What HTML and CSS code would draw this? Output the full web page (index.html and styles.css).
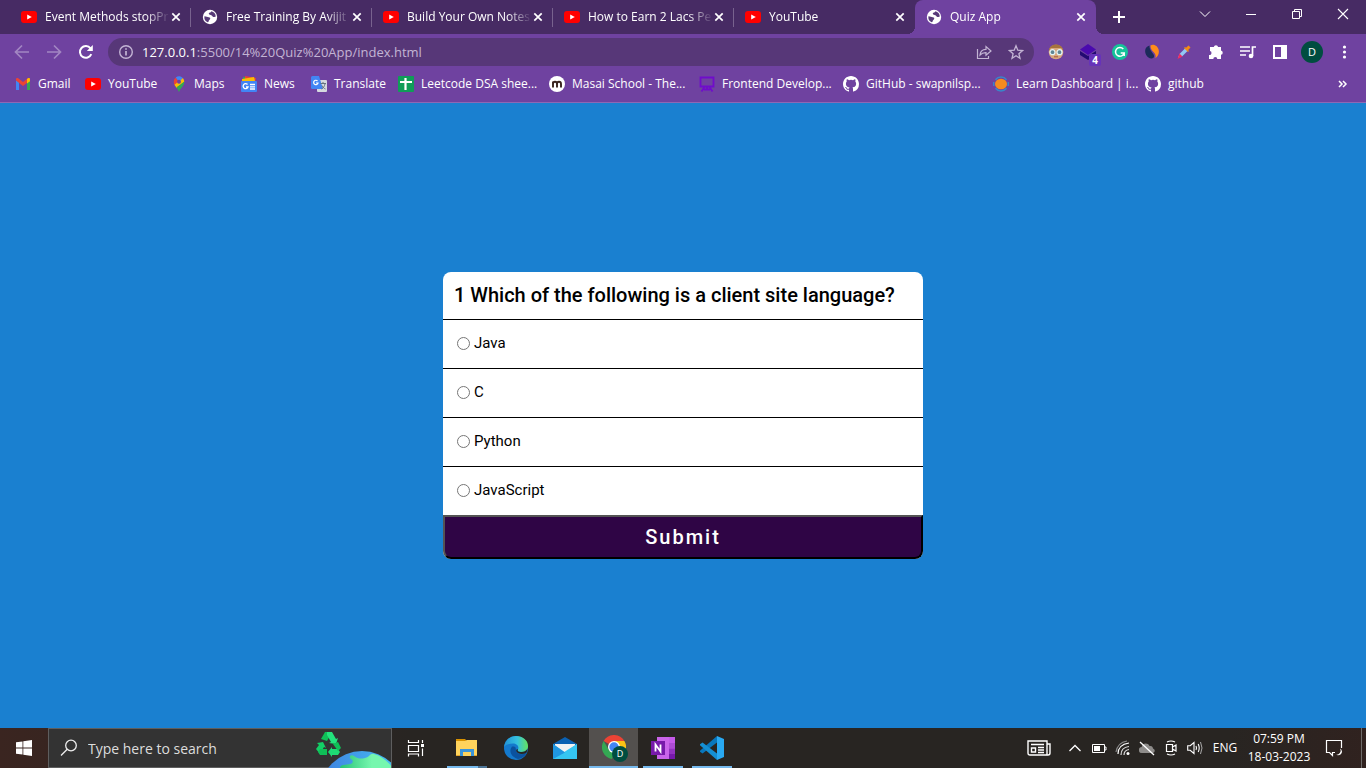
FILE: index.html
```html
<!DOCTYPE html>
<html lang="en">
<head>
<meta charset="utf-8">
<title>Quiz App</title>
<link rel="stylesheet" href="styles.css">
</head>
<body>
<svg class="defs" aria-hidden="true">
  <symbol id="yt" viewBox="0 0 16 16"><rect y="2" width="16" height="12" rx="3" fill="#f00"/><path d="M6.2 5.4v5.2L10.8 8z" fill="#fff"/></symbol>
  <symbol id="globe" viewBox="0 0 16 16"><circle cx="8" cy="8" r="7.2" fill="#fff"/><path d="M2.4 7.2c2 .2 3 .9 4.3 1 1.500.1 1.800.8 1.400 1.800-.3.900-1.300 1-1.400 2.100-.1.800-.4 1.200-1 1.200A5.800 5.800 0 0 1 2.400 7.200zM9.300 2.300c-.2 1-.9 1.300-1.900 1.500-.9.200-.6 1.200-.1 1.700.7.700 2 .3 2.700 1.200.6.900 1.400 1.500 2.400 1.300l1.400-.6A5.800 5.800 0 0 0 9.300 2.300z" fill="#573a78"/></symbol>
  <symbol id="close" viewBox="0 0 16 16"><path d="M4.300 4.300l7.400 7.400M11.700 4.300l-7.400 7.400" stroke="#fff" stroke-width="1.700" fill="none"/></symbol>
  <symbol id="octocat" viewBox="0 0 16 16"><path fill="#fff" d="M8 0C3.580 0 0 3.580 0 8c0 3.540 2.290 6.530 5.470 7.590.4.070.55-.17.55-.38 0-.19-.01-.82-.01-1.490-2.010.37-2.530-.49-2.690-.94-.09-.23-.48-.94-.82-1.130-.28-.15-.68-.52-.01-.53.63-.01 1.080.58 1.230.82.72 1.210 1.870.87 2.330.66.07-.52.28-.87.51-1.070-1.780-.2-3.640-.89-3.640-3.950 0-.87.31-1.590.82-2.150-.08-.2-.36-1.020.08-2.120 0 0 .67-.21 2.200.82a7.600 7.600 0 0 1 4 0c1.530-1.040 2.200-.82 2.200-.82.44 1.100.16 1.920.08 2.120.51.56.82 1.270.82 2.150 0 3.070-1.870 3.750-3.650 3.950.29.25.54.73.54 1.480 0 1.070-.01 1.930-.01 2.200 0 .21.15.46.55.38A8 8 0 0 0 16 8c0-4.420-3.580-8-8-8z"/></symbol>
</svg>

<header class="browser">
  <div class="tabstrip">
    <div class="tabs">
      <div class="tab"><svg class="ico"><use href="#yt"/></svg><span class="tab-title">Event Methods stopPr</span><button class="tab-close" aria-label="Close tab"><svg class="ico"><use href="#close"/></svg></button></div>
      <div class="tab"><svg class="ico"><use href="#globe"/></svg><span class="tab-title">Free Training By Avijit</span><button class="tab-close" aria-label="Close tab"><svg class="ico"><use href="#close"/></svg></button></div>
      <div class="tab"><svg class="ico"><use href="#yt"/></svg><span class="tab-title">Build Your Own Notes</span><button class="tab-close" aria-label="Close tab"><svg class="ico"><use href="#close"/></svg></button></div>
      <div class="tab"><svg class="ico"><use href="#yt"/></svg><span class="tab-title">How to Earn 2 Lacs Pe</span><button class="tab-close" aria-label="Close tab"><svg class="ico"><use href="#close"/></svg></button></div>
      <div class="tab"><svg class="ico"><use href="#yt"/></svg><span class="tab-title">YouTube</span><button class="tab-close" aria-label="Close tab"><svg class="ico"><use href="#close"/></svg></button></div>
      <div class="tab tab-active"><svg class="ico"><use href="#globe"/></svg><span class="tab-title">Quiz App</span><button class="tab-close" aria-label="Close tab"><svg class="ico"><use href="#close"/></svg></button></div>
      <button class="new-tab" aria-label="New tab"><svg width="14" height="14" viewBox="0 0 14 14"><path d="M7 1v12M1 7h12" stroke="#fff" stroke-width="2"/></svg></button>
    </div>
    <div class="window-controls">
      <button aria-label="Search tabs"><svg width="12" height="12" viewBox="0 0 12 12"><path d="M1 3.500l5 5 5-5" fill="none" stroke="#fff"/></svg></button>
      <button aria-label="Minimize"><svg width="10" height="12" viewBox="0 0 10 12"><path d="M0 6.500h10" stroke="#fff"/></svg></button>
      <button aria-label="Restore"><svg width="11" height="12" viewBox="0 0 11 12"><path d="M.5 3.500h7v7h-7zM2.500 3.500v-2h7v7h-2" fill="none" stroke="#fff"/></svg></button>
      <button aria-label="Close window"><svg width="12" height="12" viewBox="0 0 12 12"><path d="M1 1l10 10M11 1L1 11" stroke="#fff" stroke-width="1.100"/></svg></button>
    </div>
  </div>

  <div class="toolbar">
    <button class="tool" aria-label="Back"><svg class="ico" viewBox="0 0 16 16"><path d="M15 8H2M8 1.500L1.500 8 8 14.500" fill="none" stroke="#a286c2" stroke-width="1.700"/></svg></button>
    <button class="tool" aria-label="Forward"><svg class="ico" viewBox="0 0 16 16"><path d="M1 8h13M8 1.500L14.500 8 8 14.500" fill="none" stroke="#a286c2" stroke-width="1.700"/></svg></button>
    <button class="tool" aria-label="Reload"><svg class="ico" viewBox="0 0 16 16"><path d="M13.300 10.200A5.900 5.900 0 1 1 12.500 4.300" fill="none" stroke="#fff" stroke-width="2"/><path d="M14.800 1v6H8.800z" fill="#fff"/></svg></button>
    <div class="omnibox">
      <svg class="ico" viewBox="0 0 16 16"><circle cx="8" cy="8" r="6.300" fill="none" stroke="#c3b4d4" stroke-width="1.400"/><path d="M8 7v4.500M8 4.200v1.600" stroke="#c3b4d4" stroke-width="1.700"/></svg>
      <a class="url" href="#"><b>127.0.0.1</b>:5500/14%20Quiz%20App/index.html</a>
      <button class="tool" aria-label="Share"><svg class="ico" viewBox="0 0 16 16"><path d="M1.500 5v9.500h11V12" fill="none" stroke="#c3b4d4" stroke-width="1.200"/><path d="M4 11c.3-4 2.300-5.600 6-5.700V2.500L15 7l-5 4.300V8.600C7.300 8.500 5.600 9.300 4 11z" fill="none" stroke="#c3b4d4" stroke-width="1.200"/></svg></button>
      <button class="tool" aria-label="Bookmark this tab"><svg class="ico" viewBox="0 0 16 16"><path d="M8 1.800l1.800 4.400 4.700.4-3.600 3.100 1.100 4.600L8 11.800l-4 2.500 1.100-4.600L1.500 6.600l4.700-.4z" fill="none" stroke="#c3b4d4" stroke-width="1.300"/></svg></button>
    </div>
    <div class="extensions">
      <button class="tool" aria-label="Avatar extension"><svg class="ico" viewBox="0 0 16 16"><circle cx="8" cy="8" r="7.300" fill="#d9a87c"/><path d="M.8 7C1 3 4 .5 8 .5S15 3 15.200 7l-2-3H2.800z" fill="#a5733e"/><circle cx="4.500" cy="8.200" r="2.500" fill="#5f8794" stroke="#e4f4f7" stroke-width="1.200"/><circle cx="11.500" cy="8.200" r="2.500" fill="#5f8794" stroke="#e4f4f7" stroke-width="1.200"/><path d="M6 12.800h4" stroke="#a4583f"/></svg></button>
      <button class="tool" aria-label="Layers extension"><svg class="ico" viewBox="0 0 16 16"><path d="M0 7l8 5 8-5v4l-8 5-8-5z" fill="#220a72"/><path d="M8 0l8 5.500L8 11 0 5.500z" fill="#4a0aae"/></svg><span class="badge">4</span></button>
      <button class="tool" aria-label="Grammar checker"><svg class="ico" viewBox="0 0 16 16"><circle cx="8" cy="8" r="8" fill="#15c39a"/><path d="M11.300 5A4.400 4.400 0 1 0 12.200 9H8.700M12.200 8.500V12" fill="none" stroke="#fff" stroke-width="1.500"/></svg></button>
      <button class="tool" aria-label="Swirl extension"><svg class="ico" viewBox="0 0 16 16"><path d="M5.500 1.500C1 3 .2 7 2.200 11 4 14.500 8.500 15.700 10 13 11 9.500 5 7.500 5.500 1.500z" fill="#1c2b5a"/><path d="M6.500 1.500c3-2 7.700.2 8.300 5.200.4 3-1 6-3.600 7.500C13.500 8.500 6 8 6.500 1.500z" fill="#ff8c1a"/></svg></button>
      <button class="tool" aria-label="Colour picker"><svg class="ico" viewBox="0 0 16 16"><path d="M2 14l1.500-4L9 4.500 11.500 7 6 12.500z" fill="#92c9f4"/><path d="M1.500 15l2-5.500 3 3z" fill="#f12a61"/><path d="M8 4l4 4 1-1-.8-1 2.300-2.500L12.500 1.500 10 3.800 9 3z" fill="#f58b12"/></svg></button>
      <button class="tool" aria-label="Extensions"><svg class="ico" viewBox="0 0 16 16"><path d="M2 3h3.800a2.200 2.200 0 0 1 4.300 0H13v3.500a2.200 2.200 0 0 1 0 4.300V15H9.300a2 2 0 0 0-4 0H1v-4a2 2 0 0 0 1-3.900z" fill="#fff"/></svg></button>
      <button class="tool" aria-label="Media control"><svg class="ico" viewBox="0 0 16 16"><path d="M0 3h10M0 7h10M0 11h6M12.500 12V3H16" fill="none" stroke="#fff" stroke-width="1.700"/><circle cx="11" cy="12" r="2.300" fill="#fff"/></svg></button>
      <button class="tool" aria-label="Side panel"><svg class="ico" viewBox="0 0 16 16"><path fill-rule="evenodd" d="M1 1h14v14H1zM3 3v10h6V3z" fill="#fff"/></svg></button>
      <button class="tool" aria-label="Profile"><span class="profile">D</span></button>
      <button class="tool" aria-label="Menu"><svg class="ico" viewBox="0 0 16 16"><g fill="#fff"><circle cx="8.500" cy="3" r="1.600"/><circle cx="8.500" cy="8" r="1.600"/><circle cx="8.500" cy="13" r="1.600"/></g></svg></button>
    </div>
  </div>

  <nav class="bookmarks" aria-label="Bookmarks">
    <a href="#"><svg class="ico" viewBox="0 0 16 16"><path d="M1 14V4l3 2v8z" fill="#4285f4"/><path d="M12 14V6l3-2v10z" fill="#34a853"/><path d="M1 4.500V3.300C1 2 2.500 1.800 3.500 2.500L8 6l4.500-3.500C13.500 1.800 15 2 15 3.300v1.200L8 10z" fill="#ea4335"/><path d="M12 3l1-.7c1-.6 2 0 2 1v2L12 7.500z" fill="#fbbc04"/></svg>Gmail</a>
    <a href="#"><svg class="ico"><use href="#yt"/></svg>YouTube</a>
    <a href="#"><svg class="ico" viewBox="0 0 16 16"><path d="M8 16C7.300 12.500 2.800 10 2.800 5.700h10.400C13.200 10 8.700 12.500 8 16z" fill="#34a853"/><path d="M2.800 5.700C2.800 4 3.500 2.600 4.800 1.500L8 5.500 4 10C3.200 8.700 2.800 7.300 2.800 5.700z" fill="#ea4335"/><path d="M3.500 8.700L11.700 2c1 1 1.500 2.300 1.500 3.700L5.700 12z" fill="#fbbc04"/><path d="M13.200 5.700c0 4-4.500 6.300-5.200 10.300-.4-2-1.500-3.200-2.500-4.700z" fill="#34a853"/><path d="M4.800 1.500C6.800-.3 10 0 11.700 2L8 6z" fill="#4285f4"/><circle cx="8" cy="5.700" r="2" fill="#6f42a0"/></svg>Maps</a>
    <a href="#"><svg class="ico" viewBox="0 0 16 16"><path d="M2 1h9v5H2z" fill="#34a853"/><path d="M4 0l11 2-1 4H4z" fill="#ea4335"/><path d="M1 3l12-2 1 4H1z" fill="#fbbc04"/><rect y="5" width="16" height="11" rx="1" fill="#4285f4"/><path d="M6.500 8.500A2.500 2.500 0 1 0 7 11H5M9 8.500h5M9 10.800h5M9 13h5" fill="none" stroke="#fff" stroke-width="1.300"/></svg>News</a>
    <a href="#"><svg class="ico" viewBox="0 0 16 16"><rect x="6" y="4" width="10" height="12" rx="1" fill="#d5d9df"/><path d="M0 1.500Q0 0 1.500 0H8l4 13H1.500Q0 13 0 11.500z" fill="#4285f4"/><path d="M6.500 5A2.200 2.200 0 1 0 7 7H5" fill="none" stroke="#fff" stroke-width="1.200"/><path d="M9.500 7.500H15M12 6v1.500M10.500 13c2-1 3-3 3.500-5M11 9.500c1 2 2 3 3.500 3.500" fill="none" stroke="#65737f"/></svg>Translate</a>
    <a href="#"><svg class="ico" viewBox="0 0 16 16"><rect width="16" height="16" rx="1" fill="#0f9d58"/><path d="M7.500 2v12M2 6h12" stroke="#fff" stroke-width="2.200"/></svg>Leetcode DSA shee...</a>
    <a href="#"><svg class="ico" viewBox="0 0 16 16"><circle cx="8" cy="8" r="8" fill="#fff"/><path d="M4 11.500V5.500M4 8c0-3 4-3 4 0v3.500M8 8c0-3 4-3 4 0v3.500" fill="none" stroke="#38231c" stroke-width="1.900"/></svg>Masai School - The...</a>
    <a href="#"><svg class="ico" viewBox="0 0 16 16"><path d="M1.500 1.500h13v9h-13zM5.500 11L2.500 15.500M10.500 11l3 4.500M8 11v3M5 13.500h6" fill="none" stroke="#700ccb" stroke-width="1.800"/></svg>Frontend Develop...</a>
    <a href="#"><svg class="ico"><use href="#octocat"/></svg>GitHub - swapnilsp...</a>
    <a href="#"><svg class="ico" viewBox="0 0 16 16"><path d="M2.500 3.700A7 7 0 0 1 13.500 3.700M2.500 12.300A7 7 0 0 0 13.500 12.300M.7 6v4M15.300 6v4" fill="none" stroke="#3a86c8" stroke-width="1.500"/><ellipse cx="8" cy="8" rx="6" ry="5.300" fill="#f68b1f"/></svg>Learn Dashboard | i...</a>
    <a href="#"><svg class="ico"><use href="#octocat"/></svg>github</a>
    <button class="overflow" aria-label="More bookmarks"><svg width="10" height="10" viewBox="0 0 10 10"><path d="M1 2l3 3-3 3M5 2l3 3-3 3" fill="none" stroke="#fff" stroke-width="1.500"/></svg></button>
  </nav>
</header>

<main class="page">
  <form class="quiz">
    <h1 class="question">1 Which of the following is a client site language?</h1>
    <label class="option"><input type="radio" name="answer">Java</label>
    <label class="option"><input type="radio" name="answer">C</label>
    <label class="option"><input type="radio" name="answer">Python</label>
    <label class="option"><input type="radio" name="answer">JavaScript</label>
    <button class="submit" type="button">Submit</button>
  </form>
</main>

<footer class="taskbar">
  <button class="task" aria-label="Start"><svg class="ico" viewBox="0 0 16 16"><path d="M0 2.300L6.500 1.400V7.600H0zM7.300 1.300L16 0v7.600H7.300zM0 8.400h6.500v6.200L0 13.700zM7.300 8.400H16V16l-8.700-1.300z" fill="#fff"/></svg></button>
  <div class="search">
    <svg class="search-icon" viewBox="0 0 18 18"><circle cx="11" cy="6.500" r="5.300" fill="none" stroke="#eee" stroke-width="1.300"/><path d="M7.200 10.300L1 16.500" stroke="#eee" stroke-width="1.300"/></svg>
    <input type="text" placeholder="Type here to search" aria-label="Type here to search">
    <svg class="search-art" viewBox="0 0 78 40" aria-hidden="true">
      <defs><linearGradient id="sea"><stop offset="0" stop-color="#3d7fe0"/><stop offset="1" stop-color="#48c6f4"/></linearGradient><linearGradient id="leaf"><stop offset="0" stop-color="#27c277"/><stop offset=".6" stop-color="#76f7ae"/></linearGradient></defs>
      <circle cx="49" cy="65" r="42" fill="url(#sea)"/>
      <path d="M27 40c0-4 6-3 10-4 4-1 3-4 1-5-3-2 0-5 3-3 4 3 7 3 11 2 5-1 5-5 9-4 8 2 14 8 19 14v2H27z" fill="url(#leaf)"/>
      <g fill="#0fbf57"><path d="M8 11l4-7h7l-5 9z"/><path d="M14 4h5l4 7 2-1-2 6-7-1 2-1-4-7z" fill="#23e37c"/><path d="M4 15l6-1 3 6-2-1-4 7-4-5 3-4z" fill="#13cf66"/><path d="M5 24l2-3h7v6H7z"/><path d="M15 24l4-5v2h6l2 3-2 3h-6v2z" fill="#1edb75"/><path d="M20 16l5-2 3 6-3 3z"/></g>
    </svg>
  </div>
  <button class="task" aria-label="Task view"><svg width="18" height="18" viewBox="0 0 18 18"><path d="M1.500 1v2.500h10V1M1.500 6.500h10v6h-10zM1.500 17.500V15h10v2.500M15.500 1v3M15.500 9.500V17" fill="none" stroke="#fff" stroke-width="1.200"/><path d="M14 5h3v3h-3z" fill="#fff"/></svg></button>
  <div class="apps">
    <button class="app app-open app-stack" aria-label="File Explorer"><svg viewBox="0 0 24 24"><path d="M1 3h9l2 2H1z" fill="#d99200"/><path d="M1 5h9l2-1h10v16H1z" fill="#ffd35c"/><path d="M5 20v-7h14v7h-3v-4H8v4z" fill="#3a94da"/><path d="M1 19h4v1H1zM19 19h3v1h-3z" fill="#e3a52b"/></svg></button>
    <button class="app" aria-label="Edge"><svg viewBox="0 0 24 24"><defs><linearGradient id="ea"><stop offset="0" stop-color="#2291d6"/><stop offset=".55" stop-color="#35c1df"/><stop offset="1" stop-color="#66e25d"/></linearGradient></defs><circle cx="12" cy="12" r="12" fill="#1479cc"/><path d="M0 11C1 4 6 0 12 0c7 0 12 4.500 12 10 0 4-3 6-7 6-3 0-4-1-3-2.500C15.500 10 12.500 7.500 9 7.500 5 7.500 2 8.500 0 11z" fill="url(#ea)"/><path d="M8 10.500c-4 5 0 11 6 12.500 4-.3 7-3 8.700-6-4 2-10 1.500-10.700-2.500-.3-2 .5-4.500-4-4z" fill="#0b529f"/><path d="M14 13.500c-1 1.500 0 2.500 3 2.500 3 0 5.500-1 6.500-3.500-.2 2-.5 3-1.200 4.500-3.500 1.500-8.500 1.300-9.900-1.500-.5-1.200 0-3 1.600-2z" fill="#282522"/></svg></button>
    <button class="app" aria-label="Mail"><svg viewBox="0 0 24 24"><path d="M0 8L12 1l12 7v4H0z" fill="#0b61b2"/><path d="M2 8h20v8H2z" fill="#f2f2f2"/><path d="M0 8l12 8.500L24 8v15H0z" fill="#2fb5ee"/><path d="M24 8v15L0 23z" fill="#35c5f2"/><path d="M0 8v15l12-6.500z" fill="#2096e0"/></svg></button>
    <button class="app app-active" aria-label="Chrome"><svg viewBox="0 0 24 24"><path d="M12 12L1.600 6A12 12 0 0 1 22.400 6z" fill="#ea4335"/><path d="M12 12V6h10.400A12 12 0 0 1 12 24z" fill="#fbc116"/><path d="M1.600 6L7 15l5 3-2 6A12 12 0 0 1 1.600 6z" fill="#34a853"/><circle cx="12" cy="12" r="6" fill="#fff"/><circle cx="12" cy="12" r="4.700" fill="#4285f4"/></svg><span class="app-badge">D</span></button>
    <button class="app app-open" aria-label="OneNote"><svg viewBox="0 0 24 24"><path d="M6 1h18v22H6z" fill="#ca64ea"/><path d="M18 1h6v6h-6z" fill="#c55ae9"/><path d="M18 7h6v5.500h-6z" fill="#ae4bd5"/><path d="M18 12.500h6V18h-6z" fill="#9332bf"/><path d="M18 18h6v5h-6z" fill="#7719aa"/><path d="M0 5h14v14H0z" fill="#7719aa"/><path d="M4.500 15.500v-7l5 7v-7" fill="none" stroke="#fff" stroke-width="1.800"/></svg></button>
    <button class="app app-open" aria-label="VS Code"><svg viewBox="0 0 24 24"><path d="M17 6.500L2.500 17.500 0 15.800v-1L17 0z" fill="#0877bd"/><path d="M17 17.500L2.500 6.500 0 8.200v1L17 24z" fill="#158fd3"/><path d="M17 0l7 3v18l-7 3z" fill="#29a9f2"/></svg></button>
  </div>
  <div class="tray">
    <button class="tray-news" aria-label="News and interests"><svg width="24" height="16" viewBox="0 0 24 16"><path d="M1 1h19v14H3q-2 0-2-2zM20 4h3v9q0 2-2 2h-2M4 4.500h13M11 7.500h6M11 10h6M11 12.500h6M4.500 8h4v4h-4z" fill="none" stroke="#fff" stroke-width="1.400"/></svg></button>
    <button aria-label="Show hidden icons"><svg width="14" height="14" viewBox="0 0 14 14"><path d="M1.500 10L7 4.500l5.500 5.500" fill="none" stroke="#fff" stroke-width="1.300"/></svg></button>
    <button aria-label="Battery"><svg width="16" height="12" viewBox="0 0 16 12"><path d="M1.500 2.500h12v8h-12zM13.500 5H15v3h-1.500" fill="none" stroke="#fff"/><path d="M3 4h6v5H3z" fill="#fff"/></svg></button>
    <button aria-label="Wi-Fi"><svg class="ico" viewBox="0 0 16 16"><g fill="none" stroke="#ddd" stroke-width="1.200"><path d="M3 14C3 8 7 4 14 3" stroke="#fff"/><path d="M1 12C2 6 6 2 12 1" stroke="#888"/><path d="M6 15c0-5 3-8 8-8.500M9 15c0-3 2-5 5-5.500"/></g><circle cx="13" cy="13.500" r="1.500" fill="#fff"/></svg></button>
    <button aria-label="Cloud storage"><svg class="ico" viewBox="0 0 16 16"><path d="M3 13a3 3 0 0 1-.3-6C3 3.500 8.500 2 10.500 6c3-.5 3.500 2 3.500 2.500 2.700 1 2 4.500-.5 4.500z" fill="#8d8b89"/><path d="M1 2l14 13" stroke="#fff" stroke-width="1.300"/></svg></button>
    <button aria-label="Meet now"><svg class="ico" viewBox="0 0 16 16"><path d="M3.500 4.500h6v7h-6zM9.500 7L13 5v6L9.500 9M4 2q4-2 8 0M4 14q4 2 8 0" fill="none" stroke="#fff" stroke-width="1.200"/></svg></button>
    <button aria-label="Volume"><svg class="ico" viewBox="0 0 16 16"><path d="M.7 5.700h2.500L7 2.500v11l-3.800-3.200H.7zM9 6q1 2 0 4M11.200 4q2 4 0 8" fill="none" stroke="#fff" stroke-width="1.100"/><path d="M13.500 2q3 6 0 12" fill="none" stroke="#aaa"/></svg></button>
    <button class="lang">ENG</button>
    <button class="clock"><time>07:59 PM</time><time>18-03-2023</time></button>
    <button class="notify" aria-label="Notifications"><svg width="18" height="18" viewBox="0 0 18 18"><path d="M16.500 9V1.500h-15v12h3l3 3v-3H10" fill="none" stroke="#fff" stroke-width="1.200"/><path d="M15 9.500a4 4 0 0 1-4.500 6c3 2 6.500 0 6.500-3a4 4 0 0 0-2-3z" fill="#fff"/></svg></button>
    <span class="show-desktop"></span>
  </div>
</footer>
</body>
</html>
```
FILE: styles.css
```css
* { box-sizing: border-box; }

body {
  margin: 0;
  min-height: 100vh;
  display: flex;
  flex-direction: column;
  font: 12px/16px "Open Sans", "Noto Sans", sans-serif;
  color: #fff;
  background: #1a80d0;
}

button {
  display: flex;
  align-items: center;
  justify-content: center;
  padding: 0;
  border: 0;
  background: none;
  color: inherit;
  font: inherit;
}

a { color: inherit; text-decoration: none; }
svg { flex: none; }
.defs { display: none; }
.ico { width: 16px; height: 16px; }

/* Browser chrome */
.browser { background: #6f42a0; border-bottom: 1px solid #8d68b4; }

.tabstrip {
  display: flex;
  justify-content: space-between;
  height: 34px;
  background: #472b64;
}

.tabs { display: flex; padding-left: 10px; }

.tab {
  position: relative;
  display: flex;
  align-items: center;
  gap: 8px;
  width: 181px;
  padding: 0 7px 0 11px;
}

.tab::after {
  content: "";
  position: absolute;
  right: 0;
  top: 8px;
  width: 1px;
  height: 19px;
  background: #78628e;
}

.tab:nth-child(5)::after { display: none; }

.tab-title {
  flex: 1;
  white-space: nowrap;
  mask-image: linear-gradient(to right, #000 80%, transparent);
}

.tab-close { margin-left: -10px; }

.tab-active { background: #6f42a0; border-radius: 8px 8px 0 0; }

.tab-active::before,
.tab-active::after {
  content: "";
  position: absolute;
  top: auto;
  bottom: 0;
  width: 8px;
  height: 8px;
}

.tab-active::before { left: -8px; background: radial-gradient(circle at 0 0, transparent 8px, #6f42a0 8px); }
.tab-active::after { right: -8px; background: radial-gradient(circle at 100% 0, transparent 8px, #6f42a0 8px); }

.new-tab { width: 46px; }

.window-controls { display: flex; height: 28px; }
.window-controls button { width: 46px; }

.toolbar {
  display: flex;
  align-items: center;
  height: 36px;
  padding: 0 6px;
}

.tool { position: relative; width: 32px; height: 28px; }

.omnibox {
  flex: 1;
  display: flex;
  align-items: center;
  margin: 0 6px;
  padding: 0 2px 0 10px;
  border-radius: 14px;
  background: #573778;
}

.url {
  flex: 1;
  margin-left: 8px;
  font-size: 13px;
  line-height: 20px;
  color: #c3b4d4;
}

.url b { font-weight: 400; color: #fff; }

.extensions { display: flex; }

.badge {
  position: absolute;
  right: 3px;
  bottom: 0;
  width: 12px;
  border-radius: 2px;
  background: #6633b9;
  font-size: 10px;
  font-weight: 700;
  line-height: 12px;
}

.profile {
  width: 22px;
  border-radius: 50%;
  background: #004d40;
  font-size: 11px;
  line-height: 22px;
}

.bookmarks {
  display: grid;
  grid-template-columns: 70px 86px 70px 70px 87px 151px 150px 144px 150px 152px 1fr auto;
  align-items: center;
  height: 32px;
  padding: 0 18px 4px 15px;
}

.bookmarks a {
  display: flex;
  align-items: center;
  gap: 7px;
  white-space: nowrap;
}

/* Quiz card */
.page {
  flex: 1;
  display: flex;
  align-items: center;
  justify-content: center;
}

.quiz {
  width: 480px;
  border-radius: 8px;
  background: #fff;
  color: #000;
  font: 15px/20px Roboto, sans-serif;
}

.question {
  margin: 0;
  padding: 11px;
  font-size: 20px;
  font-weight: 500;
  line-height: 25px;
}

.option {
  display: flex;
  align-items: center;
  gap: 4px;
  padding: 13px 14px 15px;
  border-top: 1px solid #000;
}

.option input { margin: 0; width: 13px; height: 13px; }

.submit {
  width: 100%;
  padding: 7px;
  border: 2px outset #000;
  border-radius: 0 0 8px 8px;
  background: #2f0545;
  color: #fff;
  font-size: 20px;
  font-weight: 500;
  line-height: 26px;
  letter-spacing: 2px;
}

/* Desktop taskbar */
.taskbar {
  display: flex;
  height: 40px;
  background: linear-gradient(to right, #3a2520, #282522 30%, #282522 90%, #30221f);
}

.task { width: 48px; }

.search {
  display: flex;
  align-items: center;
  width: 344px;
  padding-left: 11px;
  border: 1px solid #5e5e5e;
  background: #333;
}

.search-icon { width: 18px; height: 18px; }

.search input {
  flex: 1;
  min-width: 0;
  margin-left: 10px;
  padding: 1px 0 0;
  border: 0;
  background: none;
  color: #ddd;
  font: 14px/20px "Open Sans", sans-serif;
}

.search input::placeholder { color: #ddd; }
.search-art { width: 78px; height: 40px; }

.apps { display: flex; padding-left: 2px; }

.app { position: relative; width: 49px; }
.app > svg { width: 24px; height: 24px; }

.app-open::after {
  content: "";
  position: absolute;
  left: 5px;
  right: 4px;
  bottom: 0;
  height: 2px;
  background: #76b9ed;
}

.app-stack::after { background: linear-gradient(to right, #76b9ed 31px, #4d7597 31px); }
.app-active { background: #53504e; border-bottom: 2px solid #76b9ed; }

.app-badge {
  position: absolute;
  right: 10px;
  bottom: 4px;
  width: 16px;
  border-radius: 50%;
  background: #004d40;
  font-size: 9px;
  line-height: 16px;
}

.tray { display: flex; margin-left: auto; }
.tray button { width: 24px; }
.tray .tray-news { width: 48px; }
.tray .lang { width: 36px; }
.tray .clock { width: 72px; flex-direction: column; line-height: 18px; }
.tray .notify { width: 38px; }
.show-desktop { margin: 0 4px 0 8px; border-left: 1px solid #6e6b69; }
```
